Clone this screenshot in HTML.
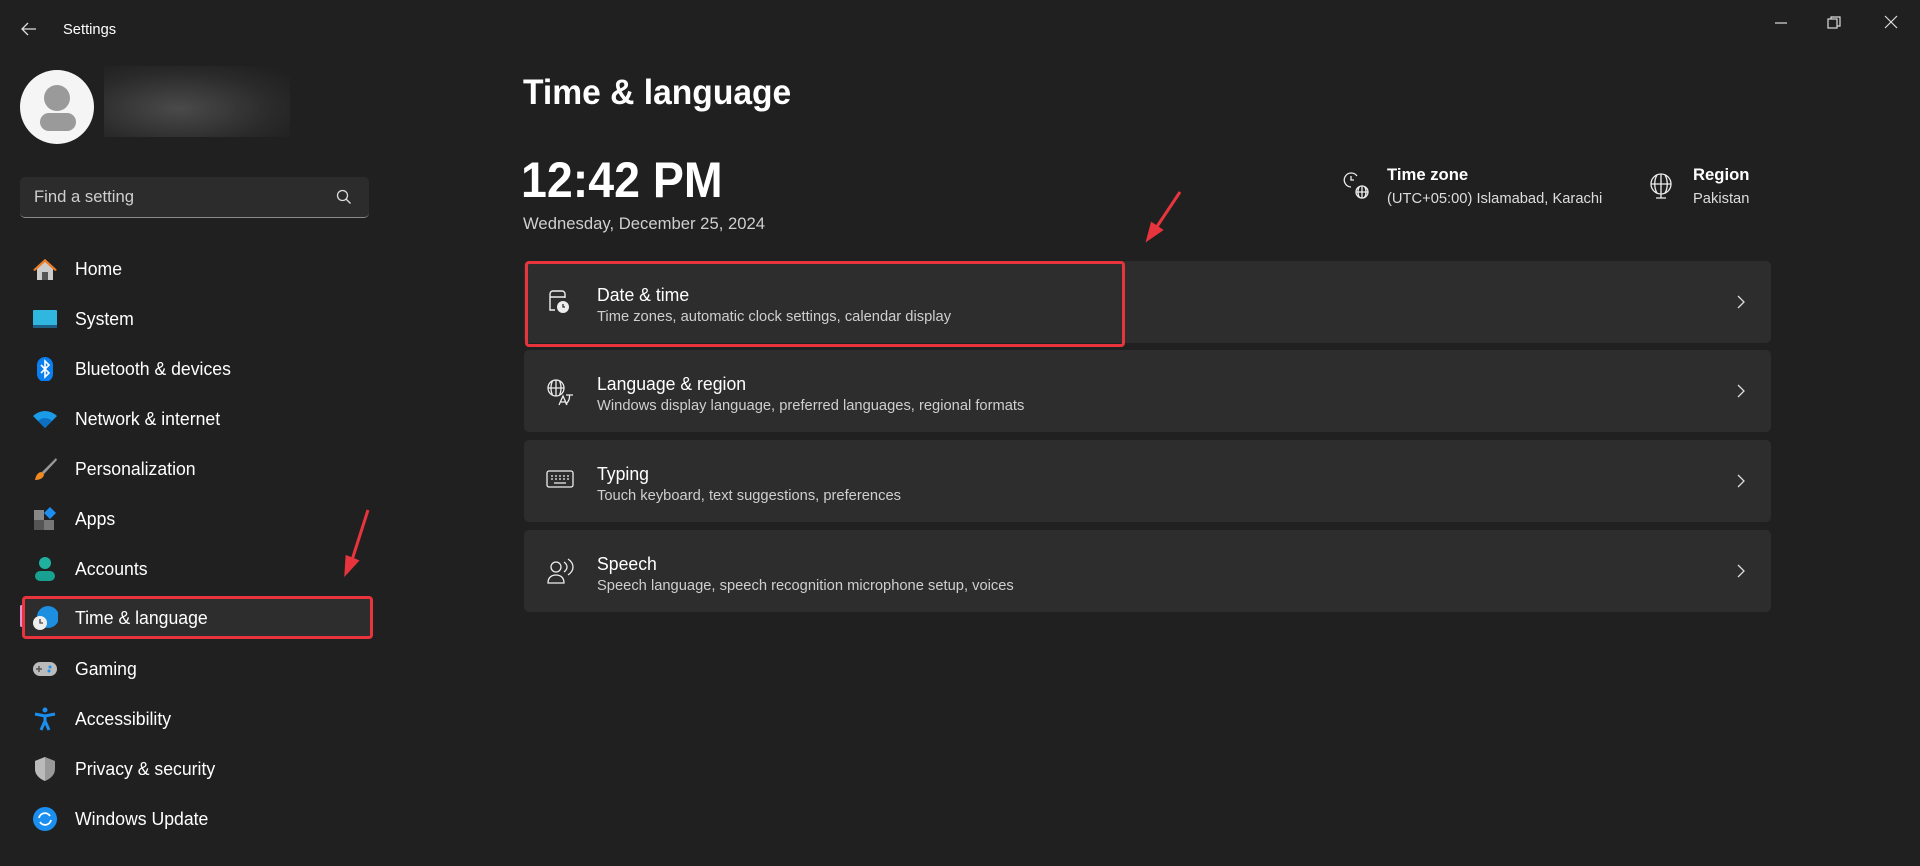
<!DOCTYPE html>
<html><head><meta charset="utf-8"><style>
*{margin:0;padding:0;box-sizing:border-box}
body{width:1920px;height:866px;background:#202020;font-family:"Liberation Sans",sans-serif;color:#fff;position:relative;overflow:hidden}
.a{position:absolute}
.c{display:inline-block;transform:scaleX(.98);transform-origin:left center;white-space:nowrap}
.nav{position:absolute;left:22px;width:351px;height:40px;display:flex;align-items:center}
.nav .ic{position:absolute;left:10px;top:8px;width:26px;height:24px}
.nav .t{position:absolute;left:53px;font-size:18px;color:#fff}
.card{position:absolute;left:524px;width:1247px;height:82px;background:#2d2d2d;border-radius:5px}
.card .ic{position:absolute;left:22px;top:28px}
.card .t1{position:absolute;left:73px;top:24px;font-size:18px}
.card .t2{position:absolute;left:73px;top:47px;font-size:15px;color:#cfcfcf}
.card .ch{position:absolute;right:25px;top:33px}
</style></head><body>

<svg class="a" style="left:20px;top:21px" width="18" height="16" viewBox="0 0 18 16"><path d="M8 2L2 8l6 6M2 8h14" stroke="#ddd" stroke-width="1.3" fill="none"/></svg>
<div class="a" style="left:63px;top:21px;font-size:15px"><span class="c">Settings</span></div>

<svg class="a" style="left:707px;top:14px" width="1200" height="20"><g stroke="#ddd" stroke-width="1.2" fill="none"><path d="M1068 9h12"/><rect x="1121" y="5" width="9" height="9"/><path d="M1124 5V3h9v9h-3"/><path d="M1178 2l12 12M1190 2l-12 12"/></g></svg>

<div class="a" style="left:20px;top:70px;width:74px;height:74px;border-radius:50%;background:#f5f5f5"></div>
<div class="a" style="left:44px;top:85px;width:26px;height:26px;border-radius:50%;background:#9a9a9a"></div>
<div class="a" style="left:40px;top:113px;width:36px;height:18px;border-radius:9px;background:#9a9a9a"></div>
<div class="a" style="left:104px;top:66px;width:186px;height:71px;background:radial-gradient(ellipse at 40% 60%,#4a4a4a,#2a2a2a 60%,#202020 90%)"></div>

<div class="a" style="left:20px;top:177px;width:349px;height:41px;background:#2c2c2c;border-radius:5px;border-bottom:1px solid #8a8a8a"></div>
<div class="a" style="left:34px;top:187px;font-size:17px;color:#cfcfcf"><span class="c">Find a setting</span></div>
<svg class="a" style="left:336px;top:189px" width="16" height="16"><circle cx="6.5" cy="6.5" r="5" stroke="#ddd" stroke-width="1.3" fill="none"/><path d="M10 10l4.5 4.5" stroke="#ddd" stroke-width="1.3"/></svg>

<div class="nav" style="top:249px"><svg class="ic" viewBox="0 0 26 24"><path d="M13 2L2 12h3v11h16V12h3z" fill="#ccc"/><path d="M13 2L1 13l2 1 10-9 10 9 2-1z" fill="#f07b20"/><rect x="10" y="15" width="6" height="8" fill="#555"/></svg><span class="t c">Home</span></div>
<div class="nav" style="top:299px"><svg class="ic" viewBox="0 0 26 24"><rect x="1" y="3" width="24" height="17" rx="1" fill="#2fb7e0"/><rect x="1" y="18" width="24" height="3" fill="#1d5f85"/></svg><span class="t c">System</span></div>
<div class="nav" style="top:349px"><svg class="ic" viewBox="0 0 26 24"><rect x="5" y="0" width="16" height="25" rx="8" fill="#0a7ff0"/><path d="M9 8l8 8-4 4V4l4 4-8 8" stroke="#fff" stroke-width="1.6" fill="none"/></svg><span class="t c">Bluetooth &amp; devices</span></div>
<div class="nav" style="top:399px"><svg class="ic" viewBox="0 0 26 24"><path d="M1 9a17 17 0 0124 0L13 21z" fill="#1a9be8"/><path d="M6 14a10 10 0 0114 0L13 21z" fill="#0d6fc0"/></svg><span class="t c">Network &amp; internet</span></div>
<div class="nav" style="top:449px"><svg class="ic" viewBox="0 0 26 24"><path d="M24 1L10 15l2 2L25 3z" fill="#999"/><path d="M10 15c-4 0-6 3-7 8 5 0 9-2 9-6z" fill="#f08a20"/></svg><span class="t c">Personalization</span></div>
<div class="nav" style="top:499px"><svg class="ic" viewBox="0 0 26 24"><rect x="2" y="3" width="10" height="10" fill="#888"/><rect x="2" y="13" width="10" height="10" fill="#555"/><rect x="12" y="13" width="10" height="10" fill="#777"/><path d="M18 0l6 6-6 6-6-6z" fill="#1a8ff0"/></svg><span class="t c">Apps</span></div>
<div class="nav" style="top:549px"><svg class="ic" viewBox="0 0 26 24"><circle cx="13" cy="6" r="6" fill="#20b0a0"/><rect x="3" y="14" width="20" height="10" rx="5" fill="#18a090"/></svg><span class="t c">Accounts</span></div>

<div class="a" style="left:20px;top:605px;width:3px;height:22px;background:#e68fd0;border-radius:2px"></div>
<div class="a" style="left:22px;top:596px;width:351px;height:43px;background:#2d2d2d;border:3px solid #e8343c;border-radius:4px"></div>
<div class="nav" style="top:598px"><svg class="ic" viewBox="0 0 26 24"><circle cx="16" cy="11" r="11" fill="#1c8fe0"/><circle cx="8" cy="17" r="7" fill="#eee"/><path d="M8 13v4h3" stroke="#444" stroke-width="1.3" fill="none"/></svg><span class="t c">Time &amp; language</span></div>

<div class="nav" style="top:649px"><svg class="ic" viewBox="0 0 26 24"><rect x="1" y="5" width="24" height="14" rx="7" fill="#bbb"/><path d="M7 9v6M4 12h6" stroke="#555" stroke-width="1.5"/><circle cx="18" cy="10" r="1.5" fill="#1a8ff0"/><circle cx="17" cy="14" r="1.5" fill="#1a8ff0"/></svg><span class="t c">Gaming</span></div>
<div class="nav" style="top:699px"><svg class="ic" viewBox="0 0 26 24"><circle cx="13" cy="3" r="2.5" fill="#1a8ff0"/><path d="M3 7l10 2 10-2M13 9v5l-4 9M13 14l4 9" stroke="#1a8ff0" stroke-width="3" fill="none"/></svg><span class="t c">Accessibility</span></div>
<div class="nav" style="top:749px"><svg class="ic" viewBox="0 0 26 24"><path d="M13 0l10 4v8c0 6-5 10-10 12C8 22 3 18 3 12V4z" fill="#999"/><path d="M13 0v24C8 22 3 18 3 12V4z" fill="#bbb"/></svg><span class="t c">Privacy &amp; security</span></div>
<div class="nav" style="top:799px"><svg class="ic" viewBox="0 0 26 24"><circle cx="13" cy="12" r="12" fill="#1a8ff0"/><path d="M7 11a6 6 0 0111-2M19 13a6 6 0 01-11 2" stroke="#fff" stroke-width="1.8" fill="none"/></svg><span class="t c">Windows Update</span></div>

<svg class="a" style="left:0;top:0" width="1920" height="866"><g stroke="#e8343c" stroke-width="3" fill="#e8343c"><path d="M368 510L352 560"/><path d="M346 573l1-16 10 4z"/><path d="M1180 192L1156 228"/><path d="M1148 239l4-15 9 6z"/></g></svg>

<div class="a" style="left:523px;top:73px;font-size:35px;font-weight:600"><span class="c" style="transform:scaleX(.96)">Time &amp; language</span></div>
<div class="a" style="left:521px;top:151px;font-size:50px;font-weight:600"><span class="c" style="transform:scaleX(.93)">12:42 PM</span></div>
<div class="a" style="left:523px;top:214px;font-size:17px;color:#cfcfcf"><span class="c">Wednesday, December 25, 2024</span></div>

<svg class="a" style="left:1343px;top:171px" width="28" height="28"><g stroke="#eee" stroke-width="1.3" fill="none"><path d="M14 5A7 7 0 1 0 8 16"/><path d="M8 5v4h3"/><circle cx="19" cy="21" r="6"/><path d="M13 21h12M19 15v12M16.5 15.5c-2 3-2 8 0 11M21.5 15.5c2 3 2 8 0 11"/></g></svg>
<div class="a" style="left:1387px;top:165px;font-size:17px;font-weight:600"><span class="c">Time zone</span></div>
<div class="a" style="left:1387px;top:190px;font-size:15px;color:#ddd"><span class="c">(UTC+05:00) Islamabad, Karachi</span></div>
<svg class="a" style="left:1648px;top:171px" width="28" height="30"><g stroke="#eee" stroke-width="1.3" fill="none"><circle cx="13" cy="13" r="10"/><path d="M3 13h20M13 3v20M9 4c-3 5-3 13 0 18M17 4c3 5 3 13 0 18M8 27h10M13 23v4"/></g></svg>
<div class="a" style="left:1693px;top:165px;font-size:17px;font-weight:600"><span class="c">Region</span></div>
<div class="a" style="left:1693px;top:190px;font-size:15px;color:#ddd"><span class="c">Pakistan</span></div>

<div class="card" style="top:261px"><svg class="ic" width="26" height="26"><g stroke="#eee" stroke-width="1.4" fill="none"><path d="M9 21H4V5a3 3 0 013-3h9a3 3 0 013 3v4M4 8h15"/></g><circle cx="17" cy="18" r="6" fill="#eee"/><path d="M17 15v3h2" stroke="#2d2d2d" stroke-width="1.3" fill="none"/></svg><span class="t1 c">Date &amp; time</span><span class="t2 c">Time zones, automatic clock settings, calendar display</span><svg class="ch" width="10" height="16"><path d="M2 2l6 6-6 6" stroke="#ddd" stroke-width="1.3" fill="none"/></svg></div>
<div class="a" style="left:525px;top:261px;width:600px;height:86px;border:3px solid #e8343c;border-radius:4px"></div>
<div class="card" style="top:350px"><svg class="ic" width="28" height="28"><g stroke="#eee" stroke-width="1.3" fill="none"><circle cx="10" cy="10" r="8"/><path d="M2 10h16M10 2v16M6.5 3c-2 4-2 10 0 14M13.5 3c2 4 2 10 0 14"/><path d="M13 27l4-9 4 9M14.5 24h5M20 17h7M23.5 17v2c0 3-2 6-4 7"/></g></svg><span class="t1 c">Language &amp; region</span><span class="t2 c">Windows display language, preferred languages, regional formats</span><svg class="ch" width="10" height="16"><path d="M2 2l6 6-6 6" stroke="#ddd" stroke-width="1.3" fill="none"/></svg></div>
<div class="card" style="top:440px"><svg class="ic" width="28" height="22"><g stroke="#eee" stroke-width="1.3" fill="none"><rect x="1" y="3" width="26" height="16" rx="2"/><path d="M5 8h2M9 8h2M13 8h2M17 8h2M21 8h2M5 11h2M9 11h2M13 11h2M17 11h2M21 11h2M8 15h12"/></g></svg><span class="t1 c">Typing</span><span class="t2 c">Touch keyboard, text suggestions, preferences</span><svg class="ch" width="10" height="16"><path d="M2 2l6 6-6 6" stroke="#ddd" stroke-width="1.3" fill="none"/></svg></div>
<div class="card" style="top:530px"><svg class="ic" width="28" height="28"><g stroke="#eee" stroke-width="1.3" fill="none"><circle cx="10" cy="9" r="5"/><path d="M2 25c0-5 3-8 8-8s8 3 8 8zM18 4c2 1.5 3 3 3 5s-1 3.5-3 5M22 1c3 2 5 5 5 8s-2 6-5 8"/></g></svg><span class="t1 c">Speech</span><span class="t2 c">Speech language, speech recognition microphone setup, voices</span><svg class="ch" width="10" height="16"><path d="M2 2l6 6-6 6" stroke="#ddd" stroke-width="1.3" fill="none"/></svg></div>

</body></html>
